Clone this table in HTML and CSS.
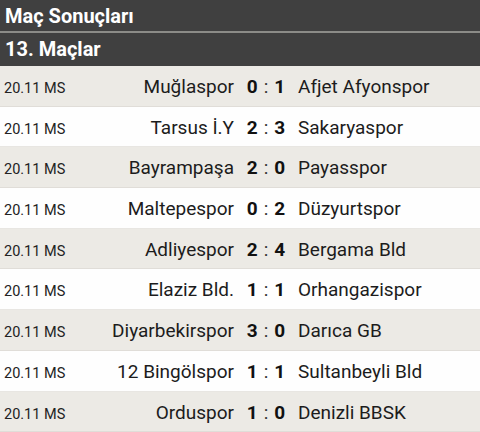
FILE: index.html
```html
<!DOCTYPE html>
<html lang="tr">
<head>
<meta charset="utf-8">
<link rel="stylesheet" href="styles.css">
</head>
<body>
<div class="screen">
  <div class="title">Maç Sonuçları</div>
  <div class="section">13. Maçlar</div>
  <div class="list">
    <div class="row"><span class="date">20.11 MS</span><span class="home">Muğlaspor</span><span class="score"><b>0</b><i>:</i><b>1</b></span><span class="away">Afjet Afyonspor</span></div>
    <div class="row"><span class="date">20.11 MS</span><span class="home">Tarsus İ.Y</span><span class="score"><b>2</b><i>:</i><b>3</b></span><span class="away">Sakaryaspor</span></div>
    <div class="row"><span class="date">20.11 MS</span><span class="home">Bayrampaşa</span><span class="score"><b>2</b><i>:</i><b>0</b></span><span class="away">Payasspor</span></div>
    <div class="row"><span class="date">20.11 MS</span><span class="home">Maltepespor</span><span class="score"><b>0</b><i>:</i><b>2</b></span><span class="away">Düzyurtspor</span></div>
    <div class="row"><span class="date">20.11 MS</span><span class="home">Adliyespor</span><span class="score"><b>2</b><i>:</i><b>4</b></span><span class="away">Bergama Bld</span></div>
    <div class="row"><span class="date">20.11 MS</span><span class="home">Elaziz Bld.</span><span class="score"><b>1</b><i>:</i><b>1</b></span><span class="away">Orhangazispor</span></div>
    <div class="row"><span class="date">20.11 MS</span><span class="home">Diyarbekirspor</span><span class="score"><b>3</b><i>:</i><b>0</b></span><span class="away">Darıca GB</span></div>
    <div class="row"><span class="date">20.11 MS</span><span class="home">12 Bingölspor</span><span class="score"><b>1</b><i>:</i><b>1</b></span><span class="away">Sultanbeyli Bld</span></div>
    <div class="row"><span class="date">20.11 MS</span><span class="home">Orduspor</span><span class="score"><b>1</b><i>:</i><b>0</b></span><span class="away">Denizli BBSK</span></div>
  </div>
</div>
</body>
</html>
```
FILE: styles.css
```css
html, body {
  margin: 0;
  padding: 0;
  background: #eceae5;
}
body {
  font-family: Roboto, "Noto Sans", sans-serif;
  width: 480px;
  height: 432px;
  overflow: hidden;
}
.screen {
  display: flex;
  flex-direction: column;
}
.title {
  height: 31px;
  background: #404040;
  color: #ffffff;
  font-weight: bold;
  font-size: 20px;
  line-height: 33px;
  padding-left: 5px;
  border-bottom: 2px solid #8c8c88;
}
.section {
  height: 33px;
  background: #404040;
  color: #ffffff;
  font-weight: bold;
  font-size: 20px;
  line-height: 33px;
  padding-left: 5px;
}
.list {
  display: flex;
  flex-direction: column;
}
.row {
  box-sizing: border-box;
  height: 40.7px;
  display: grid;
  grid-template-columns: 80px 150px 64px 1fr;
  align-items: baseline;
  padding: 9px 0 0 4px;
  background: #eceae5;
  border-bottom: 1px solid #e0ddd8;
  color: #1c1c1c;
}
.row:nth-child(even) {
  background: #fefefe;
  border-bottom-color: #e8e6e2;
}
.date {
  font-size: 14.5px;
  color: #222;
}
.home {
  font-size: 19px;
  text-align: right;
  white-space: nowrap;
}
.score {
  display: flex;
  justify-content: center;
  align-items: baseline;
  gap: 6px;
  font-size: 19px;
}
.score b {
  font-weight: bold;
  color: #111;
}
.score i {
  font-style: normal;
  color: #333;
}
.away {
  font-size: 19px;
  white-space: nowrap;
}
```
